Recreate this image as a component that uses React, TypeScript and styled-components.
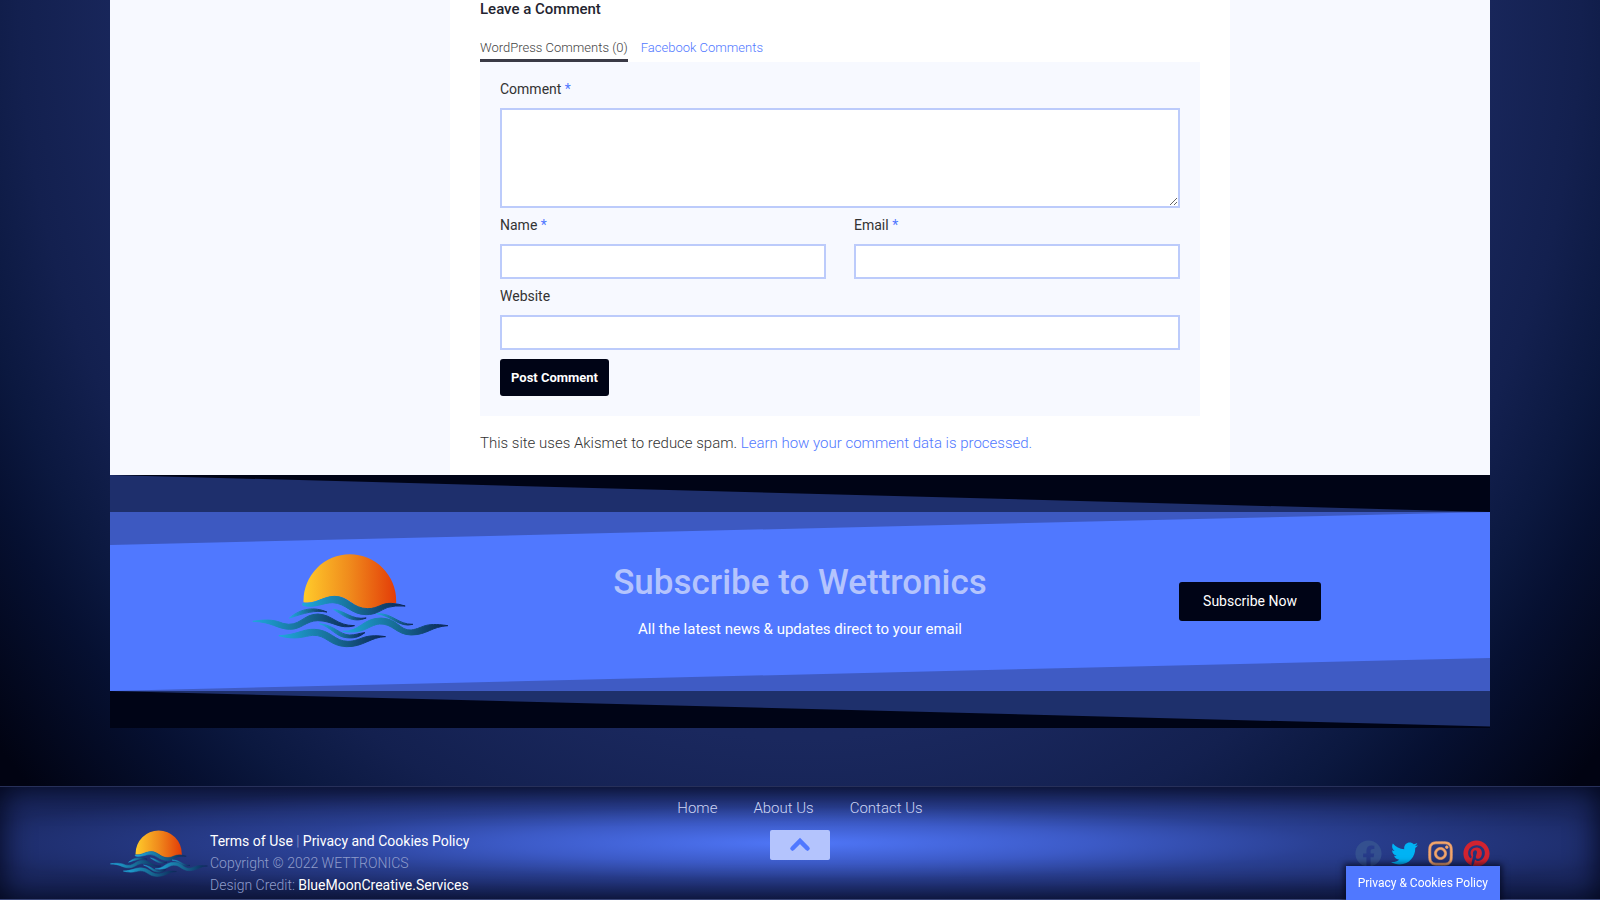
import React, { useId } from "react";
import styled, { createGlobalStyle } from "styled-components";
import { FaFacebook, FaInstagram, FaPinterest, FaTwitter } from "react-icons/fa";

const color = {
  ink: "#000416",
  blue: "#5078ff",
  pale: "#b4c4fd",
  mist: "#f7f9ff",
  field: "#bccbfb",
};

const GlobalStyle = createGlobalStyle`
  *, *::before, *::after { box-sizing: border-box; }
  html { background: ${color.ink}; }
  body {
    margin: 0;
    font-family: Roboto, "Liberation Sans", sans-serif;
    font-size: 16px;
    color: #333;
  }
  #root, body { min-height: 100vh; }
  a { text-decoration: none; }
`;

const Page = styled.div`
  display: flex;
  flex-direction: column;
  min-height: 100vh;
  background: radial-gradient(
    ellipse farthest-corner at 50% 0,
    #1d2c69 0%,
    #1a285e 58%,
    #13204f 69%,
    #0b183f 76%,
    #061031 81%,
    #010312 92%
  );
`;

const Container = styled.div`
  width: 100%;
  max-width: 1380px;
  margin: 0 auto;
`;

const Main = styled.main`
  display: grid;
  grid-template-columns: 340px minmax(0, 1fr) 260px;
  background: ${color.mist};
`;

const Article = styled.section`
  grid-column: 2;
  padding: 0 30px 20px;
  background: #fff;
`;

const Title = styled.h3`
  margin: 0;
  font-size: 15px;
  line-height: 18px;
  font-weight: 500;
  color: #23242f;
`;

const Tabs = styled.div`
  display: flex;
  gap: 13px;
  margin-top: 18px;
`;

const Tab = styled.button<{ $active?: boolean }>`
  height: 26px;
  padding: 0;
  border: 0;
  border-bottom: 3px solid ${(p) => (p.$active ? "#3a3a46" : "transparent")};
  background: none;
  font: inherit;
  font-weight: 300;
  font-size: 13px;
  color: ${(p) => (p.$active ? "#444" : color.blue)};
`;

const Form = styled.form`
  display: grid;
  grid-template-columns: 1fr 1fr;
  column-gap: 28px;
  padding: 11px 20px 20px;
  background: ${color.mist};
`;

const Field = styled.div<{ $wide?: boolean }>`
  display: flex;
  flex-direction: column;
  grid-column: ${(p) => (p.$wide ? "1 / -1" : "auto")};
  margin-bottom: 1px;
`;

const Label = styled.label`
  padding: 5px 0 7px;
  font-size: 14px;
  line-height: 23px;
  color: #333;

  span { color: ${color.blue}; }
`;

const Input = styled.input`
  height: 35px;
  padding: 0 8px;
  border: 2px solid ${color.field};
  background: #fff;
  font: inherit;
`;

const TextArea = styled.textarea`
  height: 100px;
  padding: 8px;
  border: 2px solid ${color.field};
  background: #fff;
  font: inherit;
`;

const PostButton = styled.button`
  justify-self: start;
  height: 37px;
  margin-top: 8px;
  padding: 0 11px;
  border: 0;
  border-radius: 3px;
  background: ${color.ink};
  font: inherit;
  font-size: 13px;
  font-weight: 700;
  color: #fff;
`;

const SpamNote = styled.p`
  margin: 15px 0 0;
  font-size: 15px;
  line-height: 24px;
  font-weight: 300;

  a { color: ${color.blue}; }
`;

const Divider = styled.svg`
  display: block;
  width: 100%;
  height: 37px;
  background: ${color.ink};
`;

const Banner = styled.section`
  position: relative;
  display: grid;
  grid-template-columns: repeat(3, 1fr);
  align-items: center;
  justify-items: center;
  min-height: 179px;
  padding: 0 15px;
  background: ${color.blue};
`;

const Slant = styled.svg<{ $edge: "top" | "bottom" }>`
  position: absolute;
  left: 0;
  ${(p) => p.$edge}: 0;
  width: 100%;
  height: 33px;
`;

const Pitch = styled.div`
  padding-bottom: 4px;
  text-align: center;
  white-space: nowrap;
`;

const PitchTitle = styled.h2`
  margin: 0;
  font-size: 35px;
  line-height: 46px;
  font-weight: 500;
  color: ${color.pale};
`;

const PitchText = styled.p`
  margin: 12px 0 0;
  font-size: 15px;
  line-height: 22px;
  color: #fff;
`;

const SubscribeLink = styled.a`
  padding: 0 24px;
  border-radius: 3px;
  background: ${color.ink};
  font-size: 14px;
  line-height: 39px;
  color: #fff;
`;

const Footer = styled.footer`
  margin-top: auto;
  border-top: 1px solid #27305a;
  border-bottom: 1px solid #3a4678;
  background: radial-gradient(
    ellipse farthest-corner at 50% 50%,
    #4f76f8 0%,
    #3c5ac6 26%,
    #2a4093 46%,
    #1b2963 76%,
    #182559 100%
  );
  box-shadow: inset 0 0 32px 0 ${color.ink};
`;

const FooterGrid = styled(Container)`
  display: grid;
  grid-template-columns: 1fr auto 1fr;
  height: 112px;
`;

const Legal = styled.div`
  display: flex;
  align-items: flex-start;
  gap: 2px;
  padding-top: 43px;
`;

const LegalText = styled.p`
  margin: 0;
  font-size: 14px;
  line-height: 22px;
  font-weight: 300;
  color: #8f9ccb;

  a { font-weight: 400; color: #fff; }
`;

const Middle = styled.div`
  display: flex;
  flex-direction: column;
  align-items: center;
  padding-top: 9px;
`;

const Nav = styled.nav`
  display: flex;
  gap: 36px;

  a {
    font-size: 15px;
    line-height: 24px;
    font-weight: 300;
    color: #ccd4f2;
  }
`;

const TopButton = styled.button`
  display: grid;
  place-items: center;
  width: 60px;
  height: 30px;
  margin-top: 10px;
  padding: 0;
  border: 0;
  border-radius: 2px;
  background: ${color.pale};
`;

const Social = styled.div`
  display: flex;
  justify-content: flex-end;
  gap: 9px;
  padding-top: 53px;
`;

const SocialLink = styled.a<{ $tint: string; $stroke?: number }>`
  height: 27px;
  font-size: 27px;
  line-height: 0;
  color: ${(p) => p.$tint};

  svg { stroke-width: ${(p) => p.$stroke ?? 0}; }
`;

const CookieTab = styled.button`
  position: fixed;
  right: 100px;
  bottom: 0;
  height: 34px;
  padding: 0 12px;
  border: 0;
  background: ${color.blue};
  box-shadow: 0 0 6px 2px rgba(0, 4, 22, 0.7);
  font: inherit;
  font-size: 12px;
  color: #fff;
`;

const WAVES = [
  "M190 176C230 180 250 155 285 155C325 155 340 192 385 192C415 192 425 175 455 176Q480 178 497 184Q465 182 445 188C420 198 410 210 380 210C335 210 320 176 280 174C250 174 225 192 190 182Z",
  "M40 230C90 222 110 228 130 236C180 250 190 208 235 208C280 210 290 243 345 243C300 256 280 228 235 228C200 228 185 255 150 254C110 252 100 232 40 230Z",
  "M310 260C360 262 370 220 425 220C475 222 480 258 515 256C555 250 550 232 625 243C575 246 565 270 515 271C470 270 460 236 420 238C385 242 375 270 310 260Z",
  "M118 273C170 272 190 252 225 254C275 256 285 290 325 290C365 290 370 265 438 276C395 276 370 308 320 306C270 304 260 270 220 272C195 274 170 288 118 273Z",
  "M412 207C460 205 475 240 520 239C480 250 460 215 412 207Z",
  "M240 237C285 242 300 270 330 271C350 271 355 266 376 264C355 280 340 281 320 279C290 276 275 248 240 237Z",
  "M150 220C185 190 225 186 262 202C225 196 195 205 150 220Z",
  "M282 194C320 200 335 226 380 220C340 236 315 215 282 194Z",
];

function SunsetLogo({ width, height }: { width: number; height: number }) {
  const id = useId().replace(/[^a-zA-Z0-9]/g, "");
  return (
    <svg width={width} height={height} viewBox="38 28 590 285" role="img" aria-label="Wettronics">
      <defs>
        <linearGradient id={`${id}s`}>
          <stop offset="0" stopColor="#ffcb2b" />
          <stop offset="0.5" stopColor="#f08a1c" />
          <stop offset="1" stopColor="#e33c08" />
        </linearGradient>
        <linearGradient id={`${id}w`}>
          <stop offset="0" stopColor="#1fa8dc" />
          <stop offset="0.5" stopColor="#176d96" />
          <stop offset="1" stopColor="#0b2556" />
        </linearGradient>
      </defs>
      <path
        fill={`url(#${id}s)`}
        d="M192 173V168A139 139 0 0 1 470 168V176Q445 174 425 184C400 196 370 196 345 180C325 165 310 155 285 155C250 155 230 178 192 173Z"
      />
      {WAVES.map((d) => (
        <path
          key={d}
          d={d}
          fill={`url(#${id}w)`}
          stroke={`url(#${id}w)`}
          strokeWidth="3"
          strokeLinejoin="round"
        />
      ))}
    </svg>
  );
}

export default function App() {
  return (
    <Page>
      <GlobalStyle />
      <Container>
        <Main>
          <Article>
            <Title>Leave a Comment</Title>
            <Tabs>
              <Tab type="button" $active>WordPress Comments (0)</Tab>
              <Tab type="button">Facebook Comments</Tab>
            </Tabs>
            <Form onSubmit={(e) => e.preventDefault()}>
              <Field $wide>
                <Label htmlFor="comment">Comment <span>*</span></Label>
                <TextArea id="comment" required />
              </Field>
              <Field>
                <Label htmlFor="name">Name <span>*</span></Label>
                <Input id="name" type="text" required />
              </Field>
              <Field>
                <Label htmlFor="email">Email <span>*</span></Label>
                <Input id="email" type="email" required />
              </Field>
              <Field $wide>
                <Label htmlFor="website">Website</Label>
                <Input id="website" type="url" />
              </Field>
              <PostButton type="submit">Post Comment</PostButton>
            </Form>
            <SpamNote>
              This site uses Akismet to reduce spam. <a href="#privacy">Learn how your comment data is processed.</a>
            </SpamNote>
          </Article>
        </Main>
        <Divider viewBox="0 0 100 100" preserveAspectRatio="none" aria-hidden="true">
          <path d="M0 0L100 100H0Z" fill="#1e2f6c" />
        </Divider>
        <Banner>
          <Slant $edge="top" viewBox="0 0 100 100" preserveAspectRatio="none" aria-hidden="true">
            <path d="M0 0H100L0 100Z" fill="#3d59c1" />
          </Slant>
          <Slant $edge="bottom" viewBox="0 0 100 100" preserveAspectRatio="none" aria-hidden="true">
            <path d="M0 100L100 0V100Z" fill="#3f5bc4" />
          </Slant>
          <SunsetLogo width={197} height={95} />
          <Pitch>
            <PitchTitle>Subscribe to Wettronics</PitchTitle>
            <PitchText>All the latest news &amp; updates direct to your email</PitchText>
          </Pitch>
          <SubscribeLink href="#subscribe">Subscribe Now</SubscribeLink>
        </Banner>
        <Divider viewBox="0 0 100 100" preserveAspectRatio="none" aria-hidden="true">
          <path d="M0 0H100V96Z" fill="#1e306c" />
        </Divider>
      </Container>
      <Footer>
        <FooterGrid>
          <Legal>
            <SunsetLogo width={98} height={48} />
            <LegalText>
              <a href="#terms">Terms of Use</a> | <a href="#privacy">Privacy and Cookies Policy</a>
              <br />
              Copyright © 2022 WETTRONICS
              <br />
              Design Credit: <a href="#credit">BlueMoonCreative.Services</a>
            </LegalText>
          </Legal>
          <Middle>
            <Nav>
              <a href="#home">Home</a>
              <a href="#about">About Us</a>
              <a href="#contact">Contact Us</a>
            </Nav>
            <TopButton type="button" aria-label="Back to top">
              <svg width="22" height="16" viewBox="0 0 22 16" fill="none" stroke={color.blue} strokeWidth="4.5" strokeLinecap="round">
                <path d="M3.5 11.5L11 4L18.5 11.5" />
              </svg>
            </TopButton>
          </Middle>
          <Social>
            <SocialLink href="#facebook" aria-label="Facebook" $tint="#34508f"><FaFacebook /></SocialLink>
            <SocialLink href="#twitter" aria-label="Twitter" $tint="#00b3f4"><FaTwitter /></SocialLink>
            <SocialLink href="#instagram" aria-label="Instagram" $tint="#f5a66a" $stroke={12}><FaInstagram /></SocialLink>
            <SocialLink href="#pinterest" aria-label="Pinterest" $tint="#d2232f"><FaPinterest /></SocialLink>
          </Social>
        </FooterGrid>
      </Footer>
      <CookieTab type="button">Privacy &amp; Cookies Policy</CookieTab>
    </Page>
  );
}
